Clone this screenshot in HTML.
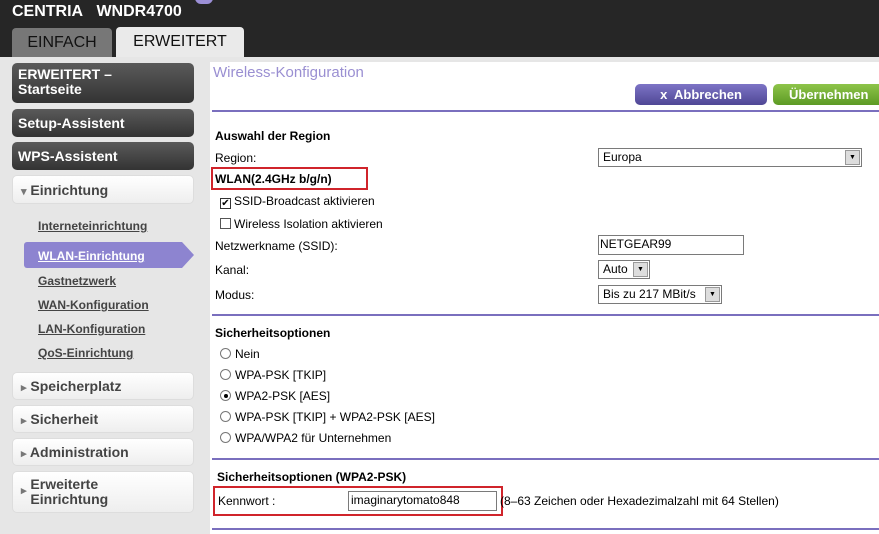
<!DOCTYPE html>
<html><head><meta charset="utf-8"><style>
*{margin:0;padding:0;box-sizing:border-box}
body{width:879px;height:534px;overflow:hidden;background:#fff;font-family:"Liberation Sans",Arial,sans-serif;position:relative}
.a{position:absolute;white-space:nowrap}
.hdr{left:0;top:0;width:879px;height:57px;background:#262626}
.side{left:0;top:57px;width:210px;height:477px;background:#e6e6e6}
.db{left:12px;width:182px;background:linear-gradient(#5a5a5a,#333);border-radius:5px;color:#fff;font-weight:bold;font-size:14px;padding-left:6px}
.lb{left:12px;width:182px;background:linear-gradient(#fff,#eee);border:1px solid #ddd;border-radius:5px;color:#444;font-weight:bold;font-size:14px;padding-left:8px}
.sl{left:38px;font-size:12px;font-weight:bold;color:#444;text-decoration:underline}
.t{font-size:12px;color:#000}
.b{font-size:12px;font-weight:bold;color:#000}
.hr{left:212px;width:667px;height:2px;background:#7a6fbe}
.sel{border:1px solid #7a7a7a;background:#fff;font-size:12px;padding-left:4px;height:19px;line-height:17px}
.arr{position:absolute;right:1px;top:1px;width:15px;height:15px;background:#ddd;border:1px solid #999;font-size:7px;text-align:center;line-height:13px}
.rad{display:inline-block;width:11px;height:11px;border-radius:50%;border:1px solid #777;vertical-align:-1px;margin-right:4px;background:#fff;position:relative}
.red{border:2px solid #d0242b}
.tr{font-size:11px;color:#777}
</style></head><body>
<div class="a hdr"></div>
<div class="a" style="left:12px;top:3px;color:#fff;font-size:16px;font-weight:bold">CENTRIA&nbsp;&nbsp;&nbsp;WNDR4700</div>
<div class="a" style="left:195px;top:-8px;width:18px;height:12px;border-radius:6px;background:#9b8fd6"></div>
<div class="a" style="left:12px;top:28px;width:100px;height:29px;background:#777;border-radius:4px 4px 0 0;color:#111;font-size:16px;text-align:center;line-height:29px">EINFACH</div>
<div class="a" style="left:116px;top:27px;width:128px;height:30px;background:#eaeaea;border-radius:4px 4px 0 0;color:#111;font-size:16px;text-align:center;line-height:30px">ERWEITERT</div>
<div class="a side"></div>
<div class="a db" style="top:63px;height:40px;padding-top:4px;line-height:15px">ERWEITERT –<br>Startseite</div>
<div class="a db" style="top:109px;height:28px;line-height:28px">Setup-Assistent</div>
<div class="a db" style="top:142px;height:28px;line-height:28px">WPS-Assistent</div>
<div class="a lb" style="top:175px;height:29px;line-height:28px"><span class="tr">▾</span> Einrichtung</div>
<div class="a sl" style="top:219px">Interneteinrichtung</div>
<div class="a" style="left:24px;top:242px;width:158px;height:26px;background:#8d84d0;border-radius:3px 0 0 3px"></div>
<div class="a" style="left:182px;top:242px;width:0;height:0;border-top:13px solid transparent;border-bottom:13px solid transparent;border-left:12px solid #8d84d0"></div>
<div class="a sl" style="top:249px;color:#fff">WLAN-Einrichtung</div>
<div class="a sl" style="top:274px">Gastnetzwerk</div>
<div class="a sl" style="top:298px">WAN-Konfiguration</div>
<div class="a sl" style="top:322px">LAN-Konfiguration</div>
<div class="a sl" style="top:346px">QoS-Einrichtung</div>
<div class="a lb" style="top:372px;height:28px;line-height:27px"><span class="tr">▸</span> Speicherplatz</div>
<div class="a lb" style="top:405px;height:28px;line-height:27px"><span class="tr">▸</span> Sicherheit</div>
<div class="a lb" style="top:438px;height:28px;line-height:27px"><span class="tr">▸</span> Administration</div>
<div class="a lb" style="top:471px;height:42px;line-height:15px;padding-top:5px"><span class="tr" style="float:left;margin-top:7px">▸</span>&nbsp;Erweiterte<br>&nbsp;Einrichtung</div>

<div class="a" style="left:210px;top:57px;width:669px;height:5px;background:#e6e6e6"></div>
<div class="a" style="left:213px;top:64px;font-size:15px;color:#9a8fd2">Wireless-Konfiguration</div>
<div class="a" style="left:635px;top:84px;width:132px;height:21px;background:linear-gradient(#7d74c6,#4f4795);border-radius:5px;color:#fff;font-weight:bold;font-size:13px;text-align:center;line-height:21px">x&nbsp; Abbrechen</div>
<div class="a" style="left:773px;top:84px;width:120px;height:21px;background:linear-gradient(#8ec44a,#5c9a24);border-radius:5px;color:#fff;font-weight:bold;font-size:13px;padding-left:16px;line-height:21px">Übernehmen</div>
<div class="a hr" style="top:110px"></div>

<div class="a b" style="left:215px;top:129px">Auswahl der Region</div>
<div class="a t" style="left:215px;top:151px">Region:</div>
<div class="a sel" style="left:598px;top:148px;width:264px">Europa<span class="arr">▼</span></div>
<div class="a red" style="left:211px;top:167px;width:157px;height:23px"></div>
<div class="a b" style="left:215px;top:172px">WLAN(2.4GHz b/g/n)</div>
<div class="a t" style="left:220px;top:194px"><span style="display:inline-block;width:11px;height:11px;border:1px solid #333;font-size:10px;line-height:9px;text-align:center;vertical-align:-1px;margin-right:3px">✔</span>SSID-Broadcast aktivieren</div>
<div class="a t" style="left:220px;top:217px"><span style="display:inline-block;width:11px;height:11px;border:1px solid #555;vertical-align:-1px;margin-right:3px"></span>Wireless Isolation aktivieren</div>
<div class="a t" style="left:215px;top:239px">Netzwerkname (SSID):</div>
<div class="a sel" style="left:598px;top:235px;width:146px;height:20px;padding-left:1px">NETGEAR99</div>
<div class="a t" style="left:215px;top:263px">Kanal:</div>
<div class="a sel" style="left:598px;top:260px;width:52px">Auto<span class="arr">▼</span></div>
<div class="a t" style="left:215px;top:288px">Modus:</div>
<div class="a sel" style="left:598px;top:285px;width:124px">Bis zu 217 MBit/s<span class="arr">▼</span></div>
<div class="a hr" style="top:314px"></div>

<div class="a b" style="left:215px;top:326px">Sicherheitsoptionen</div>
<div class="a t" style="left:220px;top:347px"><span class="rad"></span>Nein</div>
<div class="a t" style="left:220px;top:368px"><span class="rad"></span>WPA-PSK [TKIP]</div>
<div class="a t" style="left:220px;top:389px"><span class="rad"><span style="position:absolute;left:3px;top:3px;width:4px;height:4px;border-radius:50%;background:#000"></span></span>WPA2-PSK [AES]</div>
<div class="a t" style="left:220px;top:410px"><span class="rad"></span>WPA-PSK [TKIP] + WPA2-PSK [AES]</div>
<div class="a t" style="left:220px;top:431px"><span class="rad"></span>WPA/WPA2 für Unternehmen</div>
<div class="a hr" style="top:458px"></div>

<div class="a b" style="left:217px;top:470px">Sicherheitsoptionen (WPA2-PSK)</div>
<div class="a red" style="left:213px;top:486px;width:290px;height:30px"></div>
<div class="a t" style="left:218px;top:494px">Kennwort :</div>
<div class="a sel" style="left:348px;top:491px;width:149px;height:20px;padding-left:2px">imaginarytomato848</div>
<div class="a t" style="left:500px;top:494px">(8–63 Zeichen oder Hexadezimalzahl mit 64 Stellen)</div>
<div class="a hr" style="top:528px"></div>
</body></html>
